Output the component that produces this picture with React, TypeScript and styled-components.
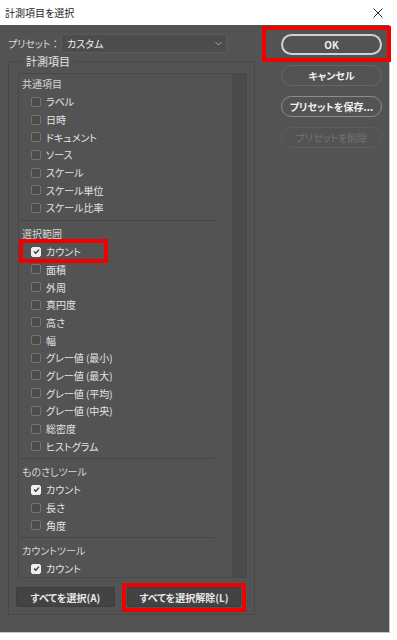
import React from "react";
import styled, { createGlobalStyle } from "styled-components";

const GlobalStyle = createGlobalStyle`
  html, body {
    margin: 0;
    padding: 0;
    background: #ffffff;
  }
  body {
    font-family: "Noto Sans CJK JP", "Noto Sans", sans-serif;
    font-feature-settings: "palt" 1;
  }
`;

const Window = styled.div`
  width: 397px;
  height: 640px;
  background: #ffffff;
`;

const TitleBar = styled.div`
  height: 25px;
  display: flex;
  align-items: center;
  justify-content: space-between;
  padding: 0 14px 0 5px;
  box-sizing: border-box;
  font-size: 10px;
  color: #1e1e1e;
`;

const Panel = styled.div`
  width: 390px;
  height: 608px;
  background: #535353;
  display: flex;
  box-sizing: border-box;
  border-right: 1px solid #c4c4c4;
  border-bottom: 1px solid #c4c4c4;
  font-size: 10px;
  color: #e2e2e2;
`;

const LeftColumn = styled.div`
  width: 255px;
  padding: 9px 0 0 8px;
  box-sizing: border-box;
`;

const PresetRow = styled.div`
  display: flex;
  align-items: center;
  height: 18px;
`;

const PresetLabel = styled.span`
  width: 53px;
  white-space: pre;
  color: #dcdcdc;
`;

const Select = styled.div`
  width: 166px;
  height: 19px;
  box-sizing: border-box;
  background: #4c4c4c;
  border: 1px solid #5a5a5a;
  border-radius: 2px;
  display: flex;
  align-items: center;
  justify-content: space-between;
  padding: 0 4px 0 5px;
  color: #ececec;
`;

const Fieldset = styled.fieldset`
  margin: 1px 0 0 0;
  padding: 0 0 7px 0;
  width: 247px;
  box-sizing: border-box;
  border: 1px solid #484848;
  min-inline-size: 0;
`;

const Legend = styled.legend`
  margin-left: 13px;
  padding: 0 4px;
  font-size: 11px;
  line-height: 16px;
  color: #e6e6e6;
`;

const List = styled.div`
  margin: 4px 0 0 9px;
  width: 229px;
  height: 505px;
  box-sizing: border-box;
  border: 1px solid #484848;
  display: flex;
`;

const ListContent = styled.div`
  width: 213px;
  padding: 0 18px 0 1px;
  box-sizing: border-box;
`;

const Scrollbar = styled.div`
  width: 14px;
  background: #4a4a4a;
`;

const GroupTitle = styled.div`
  height: 19px;
  display: flex;
  align-items: center;
  padding-left: 2px;
  color: #d6d6d6;
`;

const Separator = styled.div`
  height: 1px;
  margin: 3px 0;
  background: #464646;
`;

const Item = styled.div<{ $highlight?: boolean }>`
  position: relative;
  height: 17.7px;
  display: flex;
  align-items: center;
  padding-left: 11px;
  gap: 5px;
  color: #e4e4e4;

  &::after {
    content: "";
    display: ${(p) => (p.$highlight ? "block" : "none")};
    position: absolute;
    left: -1px;
    top: -4px;
    width: 89px;
    height: 24px;
    box-sizing: border-box;
    border: 4px solid #f00000;
  }
`;

const Box = styled.span<{ $checked?: boolean }>`
  width: 10px;
  height: 10px;
  box-sizing: border-box;
  border-radius: 2px;
  border: 1px solid ${(p) => (p.$checked ? "#f0f0f0" : "#747474")};
  background: ${(p) => (p.$checked ? "#f0f0f0" : "#4b4b4b")};
  display: flex;
  align-items: center;
  justify-content: center;
`;

const BottomRow = styled.div`
  display: flex;
  gap: 12px;
  margin: 9px 0 0 7px;
`;

const FlatButton = styled.div<{ $width: number; $highlight?: boolean }>`
  position: relative;
  width: ${(p) => p.$width}px;
  height: 20px;
  box-sizing: border-box;
  background: #434343;
  border: 1px solid #3d3d3d;
  border-radius: 2px;
  display: flex;
  align-items: center;
  justify-content: center;
  color: #e8e8e8;
  font-weight: 700;

  &::after {
    content: "";
    display: ${(p) => (p.$highlight ? "block" : "none")};
    position: absolute;
    inset: -5px -6px -6px -6px;
    border: 4px solid #f00000;
  }
`;

const RightColumn = styled.div`
  width: 101px;
  margin-left: 26px;
  padding-top: 9px;
  display: flex;
  flex-direction: column;
  gap: 10px;
`;

type PillKind = "primary" | "normal" | "bright" | "disabled";

const pillBorder: Record<PillKind, string> = {
  primary: "2px solid #d2d2d2",
  normal: "1px solid #666666",
  bright: "1px solid #8c8c8c",
  disabled: "1px solid #5d5d5d",
};

const Pill = styled.div<{ $kind: PillKind; $highlight?: boolean }>`
  position: relative;
  height: 21px;
  box-sizing: border-box;
  border: ${(p) => pillBorder[p.$kind]};
  border-radius: 11px;
  display: flex;
  align-items: center;
  justify-content: center;
  font-weight: ${(p) => (p.$kind === "disabled" ? 400 : 700)};
  color: ${(p) => (p.$kind === "disabled" ? "#747474" : "#f0f0f0")};

  &::after {
    content: "";
    display: ${(p) => (p.$highlight ? "block" : "none")};
    position: absolute;
    inset: -10px -11px -9px -21px;
    border: 4px solid #f00000;
  }
`;

const groups: { title: string; items: [string, boolean, boolean?][] }[] = [
  {
    title: "共通項目",
    items: [
      ["ラベル", false],
      ["日時", false],
      ["ドキュメント", false],
      ["ソース", false],
      ["スケール", false],
      ["スケール単位", false],
      ["スケール比率", false],
    ],
  },
  {
    title: "選択範囲",
    items: [
      ["カウント", true, true],
      ["面積", false],
      ["外周", false],
      ["真円度", false],
      ["高さ", false],
      ["幅", false],
      ["グレー値 (最小)", false],
      ["グレー値 (最大)", false],
      ["グレー値 (平均)", false],
      ["グレー値 (中央)", false],
      ["総密度", false],
      ["ヒストグラム", false],
    ],
  },
  {
    title: "ものさしツール",
    items: [
      ["カウント", true],
      ["長さ", false],
      ["角度", false],
    ],
  },
  {
    title: "カウントツール",
    items: [["カウント", true]],
  },
];

const Check = () => (
  <svg width="7" height="7" viewBox="0 0 7 7">
    <path d="M1 3.6 L2.8 5.3 L6 1.6" fill="none" stroke="#3a3a3a" strokeWidth="1.4" />
  </svg>
);

export default function App() {
  return (
    <Window>
      <GlobalStyle />
      <TitleBar>
        <span>計測項目を選択</span>
        <svg width="10" height="10" viewBox="0 0 10 10">
          <path d="M0.5 0.5 L9.5 9.5 M9.5 0.5 L0.5 9.5" stroke="#2a2a2a" strokeWidth="1" />
        </svg>
      </TitleBar>
      <Panel>
        <LeftColumn>
          <PresetRow>
            <PresetLabel>プリセット ：</PresetLabel>
            <Select>
              <span>カスタム</span>
              <svg width="7" height="5" viewBox="0 0 7 5">
                <path d="M0.5 1 L3.5 4 L6.5 1" fill="none" stroke="#a8a8a8" strokeWidth="1" />
              </svg>
            </Select>
          </PresetRow>
          <Fieldset>
            <Legend>計測項目</Legend>
            <List>
              <ListContent>
                {groups.map((g, gi) => (
                  <React.Fragment key={g.title}>
                    {gi > 0 && <Separator />}
                    <GroupTitle>{g.title}</GroupTitle>
                    {g.items.map(([label, checked, hl], i) => (
                      <Item key={i} $highlight={hl}>
                        <Box $checked={checked}>{checked && <Check />}</Box>
                        <span>{label}</span>
                      </Item>
                    ))}
                  </React.Fragment>
                ))}
              </ListContent>
              <Scrollbar />
            </List>
            <BottomRow>
              <FlatButton $width={99}>すべてを選択(A)</FlatButton>
              <FlatButton $width={114} $highlight>
                すべてを選択解除(L)
              </FlatButton>
            </BottomRow>
          </Fieldset>
        </LeftColumn>
        <RightColumn>
          <Pill $kind="primary" $highlight>
            OK
          </Pill>
          <Pill $kind="normal">キャンセル</Pill>
          <Pill $kind="bright">プリセットを保存...</Pill>
          <Pill $kind="disabled">プリセットを削除</Pill>
        </RightColumn>
      </Panel>
    </Window>
  );
}
